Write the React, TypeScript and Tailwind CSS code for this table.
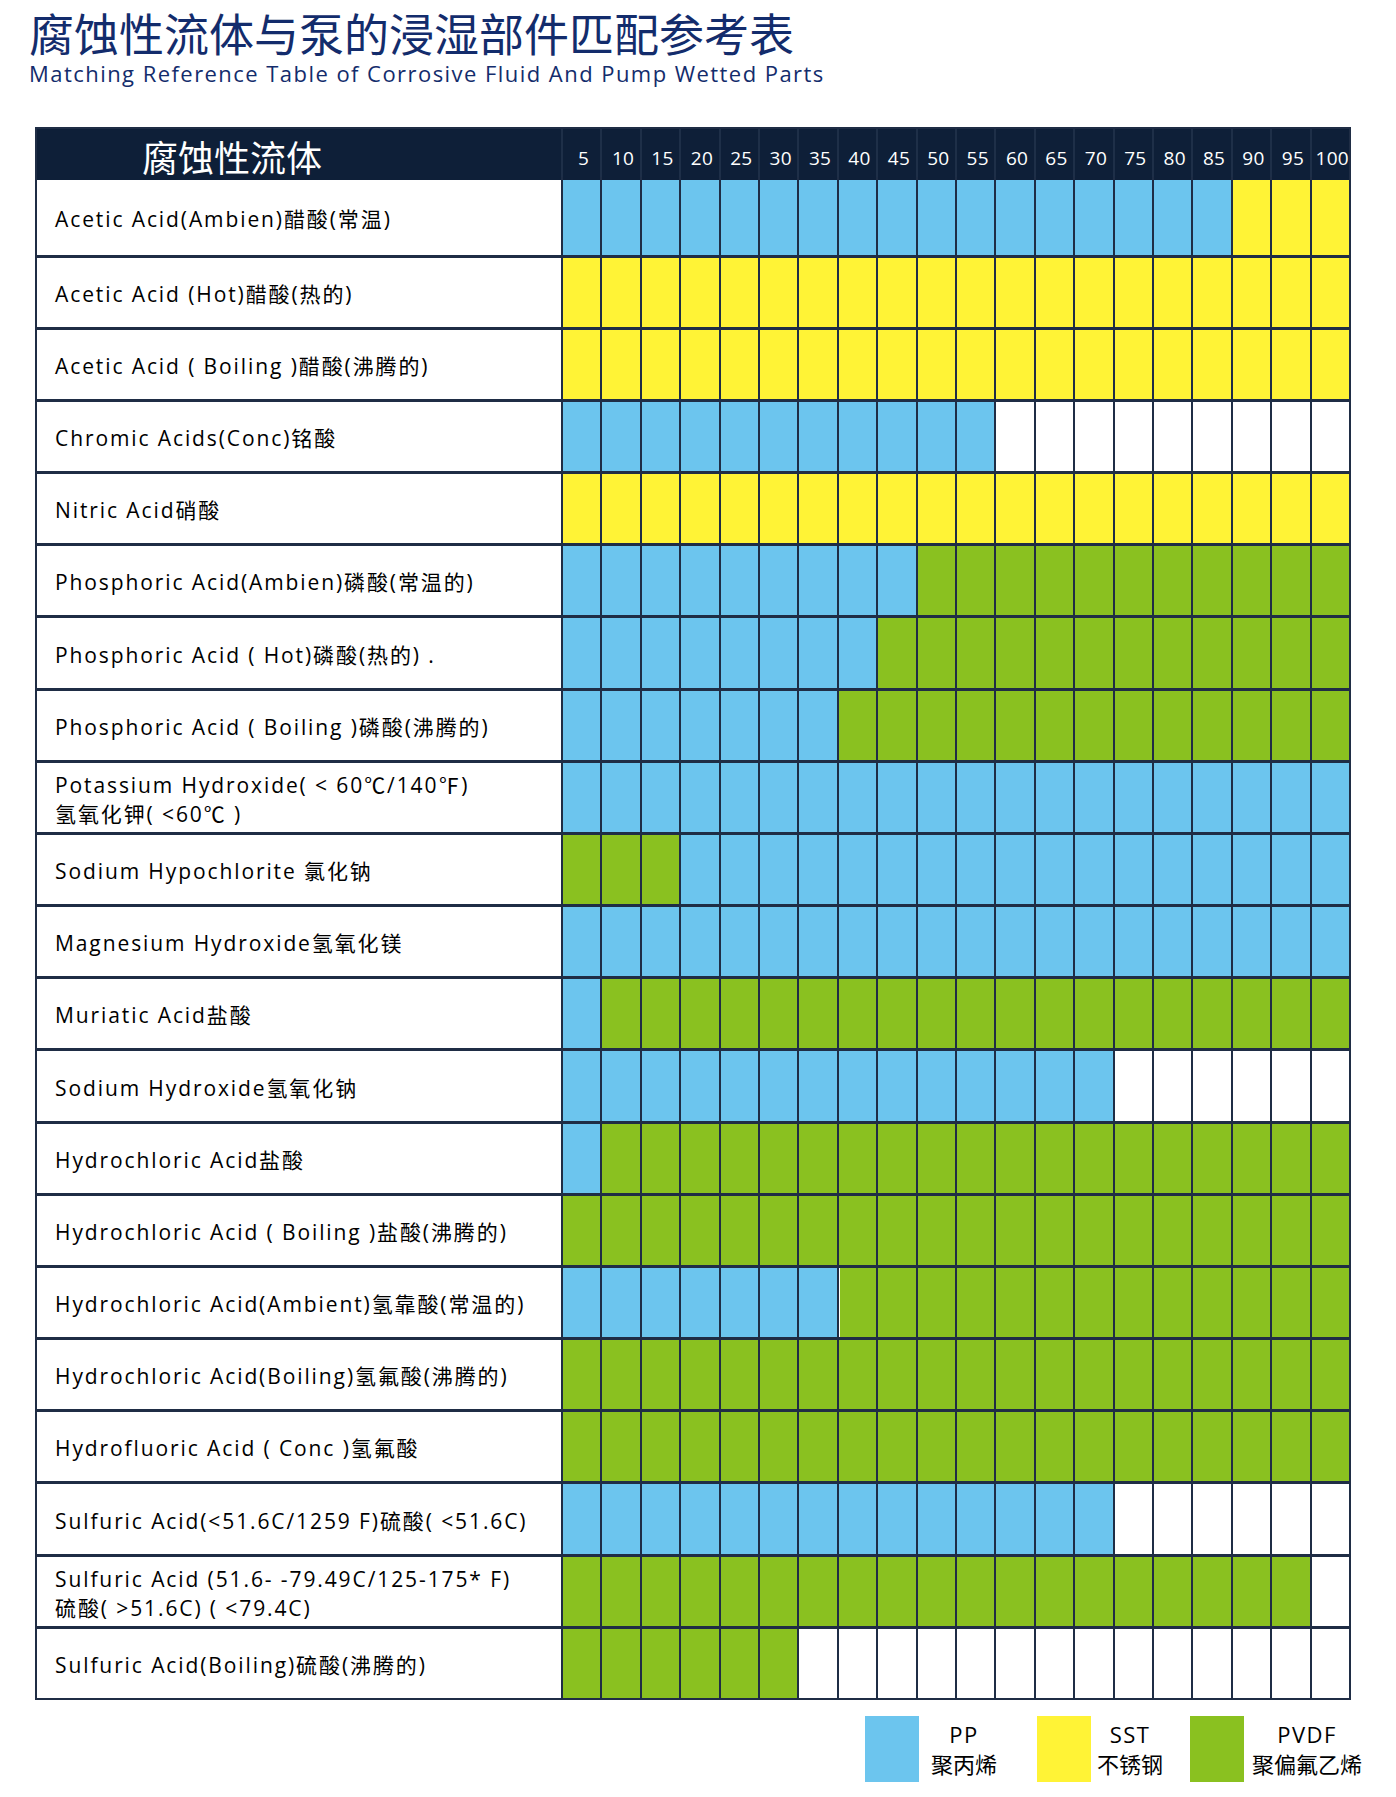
const B = "bg-[#6cc5ee]";
const Y = "bg-[#fff336]";
const G = "bg-[#8ac120]";
const W = "bg-white";

// runs of [color, count] for the 20 temperature columns
type Run = [string, number];

const rows: { label: string[]; runs: Run[] }[] = [
  { label: ["Acetic Acid(Ambien)醋酸(常温)"], runs: [[B, 17], [Y, 3]] },
  { label: ["Acetic Acid (Hot)醋酸(热的)"], runs: [[Y, 20]] },
  { label: ["Acetic Acid ( Boiling )醋酸(沸腾的)"], runs: [[Y, 20]] },
  { label: ["Chromic Acids(Conc)铭酸"], runs: [[B, 11], [W, 9]] },
  { label: ["Nitric Acid硝酸"], runs: [[Y, 20]] },
  { label: ["Phosphoric Acid(Ambien)磷酸(常温的)"], runs: [[B, 9], [G, 11]] },
  { label: ["Phosphoric Acid ( Hot)磷酸(热的) ."], runs: [[B, 8], [G, 12]] },
  { label: ["Phosphoric Acid ( Boiling )磷酸(沸腾的)"], runs: [[B, 7], [G, 13]] },
  { label: ["Potassium Hydroxide( < 60℃/140℉)", "氢氧化钾( <60℃ )"], runs: [[B, 20]] },
  { label: ["Sodium Hypochlorite 氯化钠"], runs: [[G, 3], [B, 17]] },
  { label: ["Magnesium Hydroxide氢氧化镁"], runs: [[B, 20]] },
  { label: ["Muriatic Acid盐酸"], runs: [[B, 1], [G, 19]] },
  { label: ["Sodium Hydroxide氢氧化钠"], runs: [[B, 14], [W, 6]] },
  { label: ["Hydrochloric Acid盐酸"], runs: [[B, 1], [G, 19]] },
  { label: ["Hydrochloric Acid ( Boiling )盐酸(沸腾的)"], runs: [[G, 20]] },
  { label: ["Hydrochloric Acid(Ambient)氢靠酸(常温的)"], runs: [[B, 7], [G, 13]] },
  { label: ["Hydrochloric Acid(Boiling)氢氟酸(沸腾的)"], runs: [[G, 20]] },
  { label: ["Hydrofluoric Acid ( Conc )氢氟酸"], runs: [[G, 20]] },
  { label: ["Sulfuric Acid(<51.6C/1259 F)硫酸( <51.6C)"], runs: [[B, 14], [W, 6]] },
  { label: ["Sulfuric Acid (51.6- -79.49C/125-175* F)", "硫酸( >51.6C) ( <79.4C)"], runs: [[G, 19], [W, 1]] },
  { label: ["Sulfuric Acid(Boiling)硫酸(沸腾的)"], runs: [[G, 6], [W, 14]] },
];

const temps = [5, 10, 15, 20, 25, 30, 35, 40, 45, 50, 55, 60, 65, 70, 75, 80, 85, 90, 95, 100];

function expand(runs: Run[]) {
  const out: string[] = [];
  runs.forEach(([c, n]) => {
    for (let i = 0; i < n; i++) out.push(c);
  });
  return out;
}

const grid = "grid grid-cols-[524px_repeat(20,minmax(0,1fr))] gap-x-[2px]";

function Legend({ color, en, zh, w }: { color: string; en: string; zh: string; w: string }) {
  return (
    <div className="flex items-center">
      <div className={`w-[54px] h-[66px] ${color}`} />
      <div className={`${w} flex flex-col items-center text-[22px] leading-[30px] text-black`}>
        <span className="tracking-[1.5px]">{en}</span>
        <span>{zh}</span>
      </div>
    </div>
  );
}

export default function App() {
  return (
    <div className="w-[1396px] h-[1797px] bg-white font-['Open_Sans','Noto_Sans_CJK_SC',sans-serif]">
      <div className="pl-[29px] pt-[10px] text-[#132c6c]">
        <h1 className="text-[45px] leading-[46px] font-['Noto_Sans_CJK_SC',sans-serif] font-normal">
          腐蚀性流体与泵的浸湿部件匹配参考表
        </h1>
        <p className="text-[22px] leading-[28px] tracking-[1.45px] mt-[3px]">
          Matching Reference Table of Corrosive Fluid And Pump Wetted Parts
        </p>
      </div>

      <div className="ml-[35px] mt-[40px] w-[1316px] bg-[#1f2d45] p-[2px] flex flex-col gap-y-[3px]">
        <div className={`${grid} h-[48px] bg-[#1e2f48]`}>
          <div className="bg-[#0e1f38] flex items-center pl-[105px] text-white text-[36px] font-['Noto_Sans_CJK_SC',sans-serif]">
            腐蚀性流体
          </div>
          {temps.map((t) => (
            <div key={t} className="bg-[#0e1f38] flex items-center justify-center pt-[5px] pl-[4px] text-white text-[19px] tracking-[0.3px]">
              {t}
            </div>
          ))}
        </div>

        {rows.map((r, i) => (
          <div key={i} className={`${grid} ${i === 0 ? "h-[75px]" : i % 6 === 0 ? "h-[70px]" : "h-[69px]"}`}>
            <div className="bg-white flex flex-col justify-center pl-[18px] pt-[4px] text-[21px] leading-[29px] tracking-[1.9px] text-black">
              {r.label.map((l) => (
                <span key={l}>{l}</span>
              ))}
            </div>
            {expand(r.runs).map((c, j) => (
              <div key={j} className={`${c} ${i === 15 && j === 7 ? "shadow-[inset_1px_0_0_#ffffff]" : ""}`} />
            ))}
          </div>
        ))}
      </div>

      <div className="mt-[16px] flex justify-end pr-[26px]">
        <Legend color={B} en="PP" zh="聚丙烯" w="w-[90px]" />
        <div className="w-[28px]" />
        <Legend color={Y} en="SST" zh="不锈钢" w="w-[78px]" />
        <div className="w-[21px]" />
        <Legend color={G} en="PVDF" zh="聚偏氟乙烯" w="w-[126px]" />
      </div>
    </div>
  );
}
